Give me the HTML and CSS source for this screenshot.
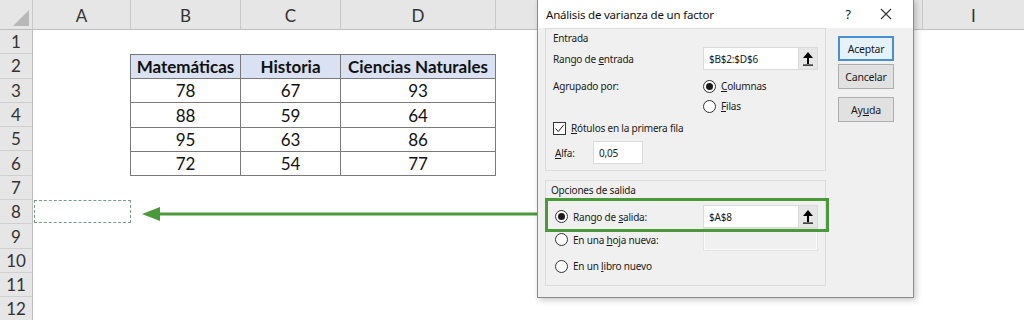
FILE: index.html
```html
<!DOCTYPE html>
<html lang="es">
<head>
<meta charset="utf-8">
<title>Análisis de varianza</title>
<link rel="stylesheet" href="styles.css">
</head>
<body>
<div class="sheet">
  <div class="corner"></div>
  <div class="ch">A</div><div class="ch">B</div><div class="ch">C</div><div class="ch">D</div>
  <div class="ch"></div><div class="ch"></div><div class="ch"></div><div class="ch"></div><div class="ch last">I</div>

  <div class="rh">1</div><div class="rh">2</div><div class="rh">3</div><div class="rh">4</div>
  <div class="rh">5</div><div class="rh">6</div><div class="rh">7</div><div class="rh">8</div>
  <div class="rh">9</div><div class="rh">10</div><div class="rh">11</div><div class="rh">12</div>

  <div class="table">
    <div class="th">Matemáticas</div><div class="th">Historia</div><div class="th">Ciencias Naturales</div>
    <div class="td">78</div><div class="td">67</div><div class="td">93</div>
    <div class="td">88</div><div class="td">59</div><div class="td">64</div>
    <div class="td">95</div><div class="td">63</div><div class="td">86</div>
    <div class="td">72</div><div class="td">54</div><div class="td">77</div>
  </div>

  <div class="sel"></div>
</div>

<svg class="arrow" width="410" height="16" viewBox="0 0 410 16">
  <polygon points="0,8 18,1 18,15" fill="#4a993a"/>
  <rect x="14" y="6.5" width="396" height="3" fill="#4a993a"/>
</svg>

<div class="dialog">
  <div class="titlebar">
    <span class="title">Análisis de varianza de un factor</span>
    <span class="help">?</span>
    <span class="close">
      <svg width="12" height="12" viewBox="0 0 12 12"><path d="M1 1 L11 11 M11 1 L1 11" stroke="#333" stroke-width="1.1"/></svg>
    </span>
  </div>
  <div class="dbody">
    <div class="groups">
      <div class="group g1">
        <div class="legend">Entrada</div>
        <div class="row rango">
          <span class="lbl">Rango de <u>e</u>ntrada</span>
          <div class="input wide"><span class="val">$B$2:$D$6</span><span class="up"><svg width="12" height="14" viewBox="0 0 12 14"><path d="M6 12 V3" stroke="#000" stroke-width="2"/><polygon points="6,0 11,6 1,6" fill="#000"/><rect x="1" y="12.5" width="10" height="1.2" fill="#000"/></svg></span></div>
        </div>
        <div class="row agr">
          <span class="lbl">Agrupado por:</span>
          <span class="opt"><span class="radio on"></span><span><u>C</u>olumnas</span></span>
        </div>
        <div class="row filas">
          <span class="opt"><span class="radio"></span><span><u>F</u>ilas</span></span>
        </div>
        <div class="row rot">
          <span class="check"><svg width="11" height="11" viewBox="0 0 11 11"><path d="M1.5 5.5 L4.3 8.5 L9.8 1.8" fill="none" stroke="#222" stroke-width="1"/></svg></span>
          <span><u>R</u>ótulos en la primera fila</span>
        </div>
        <div class="row alfa">
          <span class="lbl2"><u>A</u>lfa:</span>
          <div class="input small"><span class="val">0,05</span></div>
        </div>
      </div>
      <div class="group g2">
        <div class="legend">Opciones de salida</div>
        <div class="row salida">
          <span class="opt"><span class="radio on"></span><span>Rango de <u>s</u>alida:</span></span>
          <div class="input wide"><span class="val">$A$8</span><span class="up"><svg width="12" height="14" viewBox="0 0 12 14"><path d="M6 12 V3" stroke="#000" stroke-width="2"/><polygon points="6,0 11,6 1,6" fill="#000"/><rect x="1" y="12.5" width="10" height="1.2" fill="#000"/></svg></span></div>
        </div>
        <div class="row hoja">
          <span class="opt"><span class="radio"></span><span>En una <u>h</u>oja nueva:</span></span>
          <div class="input wide disabled"></div>
        </div>
        <div class="row libro">
          <span class="opt"><span class="radio"></span><span>En un <u>l</u>ibro nuevo</span></span>
        </div>
        <div class="hl"></div>
      </div>
    </div>
    <div class="buttons">
      <div class="btn default">Aceptar</div>
      <div class="btn">Cancelar</div>
      <div class="btn ayuda">Ay<u>u</u>da</div>
    </div>
  </div>
</div>
</body>
</html>
```

FILE: styles.css
```css
* { box-sizing: border-box; }
html, body { margin: 0; padding: 0; background: #fff; }
body { width: 1024px; height: 320px; overflow: hidden; position: relative; font-family: Lato, "Open Sans", sans-serif; }

.sheet {
  display: grid;
  grid-template-columns: 33px 98px 110px 100px 155px 107px 107px 107px 106px 101px;
  grid-template-rows: 30px repeat(12, 24.3px);
  color: #222;
}
.corner { background: #e6e6e6; border-right: 1px solid #c9c9c9; border-bottom: 1px solid #bdbdbd; position: relative; }
.corner::after {
  content: ""; position: absolute; right: 3px; bottom: 3px;
  border-style: solid; border-width: 0 0 16px 16px;
  border-color: transparent transparent #b8b8b8 transparent;
}
.ch {
  background: #e6e6e6; border-right: 1px solid #c9c9c9; border-bottom: 1px solid #bdbdbd;
  display: flex; align-items: center; justify-content: center;
  font-size: 17px; color: #333; padding-top: 2px;
}
.ch.last { border-right: none; }
.rh {
  grid-column: 1; background: #e6e6e6; border-bottom: 1px solid #cfcfcf; border-right: 1px solid #bdbdbd;
  display: flex; align-items: center; justify-content: center;
  font-size: 17px; color: #333;
}
.table {
  grid-column: 3 / 6; grid-row: 3 / 8;
  display: grid; grid-template-columns: 110px 100px 155px; grid-template-rows: repeat(5, 1fr);
  border-top: 1px solid #7a7a7a; border-left: 1px solid #7a7a7a;
  margin-left: -1px;
}
.th, .td {
  border-right: 1px solid #7a7a7a; border-bottom: 1px solid #7a7a7a;
  display: flex; align-items: center; justify-content: center;
  font-size: 17px; color: #111;
}
.th { background: #d9e1f2; font-weight: 700; }
.sel {
  grid-column: 2; grid-row: 9;
  border: 1px dashed #7a9a8a;
  margin: 0 0 1px 1px;
}

.arrow { position: absolute; left: 142px; top: 206px; }

.dialog {
  position: absolute; left: 537px; top: -1px; width: 377px; height: 299px;
  background: #f0f0f0; border: 1px solid #8a8a8a;
  box-shadow: 2px 2px 6px rgba(0,0,0,0.22);
  font-family: "Noto Sans", "Open Sans", sans-serif; font-size: 10px; letter-spacing: -0.2px; color: #1a1a1a;
}
.titlebar {
  height: 28px; background: #fff; display: flex; align-items: center;
  padding-left: 8px; font-size: 11.5px; letter-spacing: -0.2px; color: #111;
}
.title { flex: 1; }
.help { width: 30px; text-align: center; font-size: 12.5px; }
.close { width: 30px; display: flex; justify-content: center; margin: 0 12px 0 8px; }

.dbody { display: flex; padding-left: 7px; gap: 12px; }
.groups { width: 281px; position: relative; }
.group { border: 1px solid #dcdcdc; position: relative; padding-left: 7px; }
.g1 { height: 143px; }
.g2 { height: 106px; margin-top: 9px; padding-left: 7px; }
.legend { height: 18px; display: flex; align-items: center; }
.g2 .legend { margin-left: -2px; }
.row { display: flex; align-items: center; position: relative; }
.lbl { width: 150px; }
.rango { height: 23px; }
.agr { height: 20px; margin-top: 6px; }
.filas { height: 20px; padding-left: 150px; }
.rot { height: 20px; margin-top: 2px; gap: 5px; }
.alfa { height: 23px; margin-top: 3px; }
.lbl2 { width: 40px; padding-left: 2px; }

.input {
  height: 23px; background: #fff; border: 1px solid #dadada;
  display: flex; align-items: center; justify-content: space-between;
}
.input.wide { width: 115px; }
.input.small { width: 50px; }
.val { padding-left: 5px; }
.up {
  width: 19px; height: 21px; background: #e6e6e6; border-left: 1px solid #dadada;
  display: flex; align-items: center; justify-content: center;
}
.input.disabled { background: #f0f0f0; border: 2px solid #fbfbfb; outline: 1px solid #e2e2e2; outline-offset: -1px; }

.opt { display: flex; align-items: center; gap: 5px; }
.radio {
  width: 13px; height: 13px; border-radius: 50%; border: 1px solid #333; background: #fff;
  display: inline-flex; align-items: center; justify-content: center;
}
.radio.on::after { content: ""; width: 7px; height: 7px; border-radius: 50%; background: #1a1a1a; }
.check {
  width: 13px; height: 13px; border: 1px solid #333; background: #fff;
  display: inline-flex; align-items: center; justify-content: center;
}

.salida { height: 23px; margin-top: 6px; padding-left: 2px; }
.salida .opt { width: 148px; }
.hoja { height: 23px; padding-left: 2px; }
.hoja .opt { width: 148px; }
.libro { height: 20px; margin-top: 5px; padding-left: 2px; }
.hl {
  position: absolute; left: -1px; top: 17px; width: 284px; height: 34px;
  border: 3px solid #4a993a;
}

.buttons { display: flex; flex-direction: column; padding-top: 8px; }
.btn {
  width: 56px; height: 25px; background: #e1e1e1; border: 1px solid #adadad;
  display: flex; align-items: center; justify-content: center; margin-bottom: 3px;
  font-size: 10.5px;
}
.btn.default { border: 2px solid #4a90d0; background: #e5f1fb; }
.btn.ayuda { margin-top: 5px; }
```
